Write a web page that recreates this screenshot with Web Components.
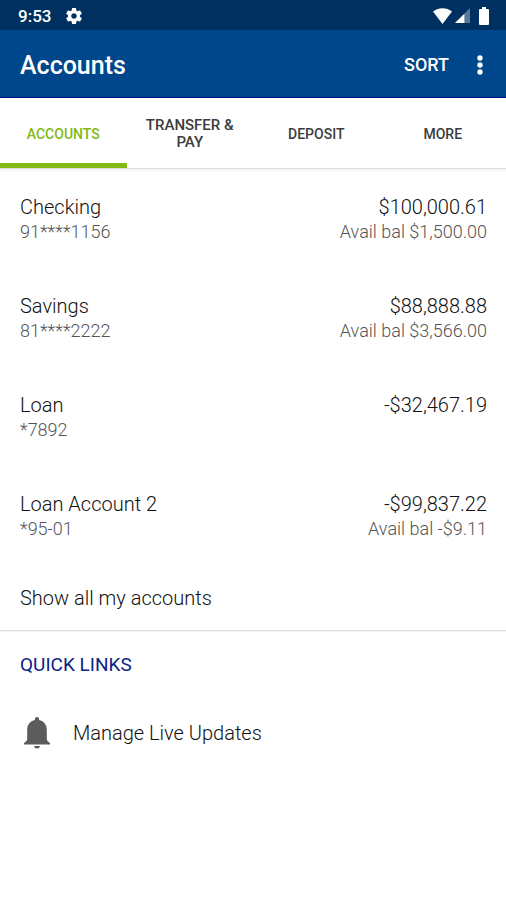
<!DOCTYPE html>
<html lang="en">
<head>
<meta charset="utf-8">
<meta name="viewport" content="width=device-width, initial-scale=1">
<title>Accounts</title>
<style>
  :root {
    --navy: #00305f;
    --blue: #00468b;
    --edge: #000c88;
    --green: #84b816;
    --ink: #111;
    --muted: #555;
    --line: #dedede;
    --gutter: 20px;
  }
  body {
    margin: 0;
    min-height: 100vh;
    background: #fff;
    color: var(--ink);
    font-family: Roboto, "Liberation Sans", sans-serif;
    font-size: 20px;
    font-weight: 300;
    line-height: 24px;
  }
</style>
</head>
<body>
<bank-app></bank-app>

<script>
  const define = (name, html, setup) => {
    const template = document.createElement("template");
    template.innerHTML = html;
    customElements.define(name, class extends HTMLElement {
      constructor() {
        super();
        this.attachShadow({ mode: "open" }).append(template.content.cloneNode(true));
      }
      connectedCallback() {
        if (setup) setup(this, this.shadowRoot);
      }
    });
  };

  define("status-bar", `
    <style>
      :host { display: flex; align-items: center; justify-content: space-between; height: 30px;
        padding: 1px 17px 0 18px; box-sizing: border-box; background: var(--navy); color: #fff; font-size: 17px; font-weight: 500; }
      div { display: flex; align-items: center; gap: 15px; }
      .signals { gap: 3px; }
      .battery { margin-left: 6px; }
      svg { display: block; fill: #fff; }
    </style>
    <div>
      <span><slot></slot></span>
      <svg width="16" height="16" viewBox="2 2 20 20" aria-label="Settings" role="img"><path d="M19.43 12.98c.04-.32.07-.64.07-.98s-.03-.66-.07-.98l2.11-1.65c.19-.15.24-.42.12-.64l-2-3.46c-.12-.22-.39-.3-.61-.22l-2.49 1c-.52-.4-1.08-.73-1.69-.98l-.38-2.65C14.46 2.18 14.25 2 14 2h-4c-.25 0-.46.18-.49.42l-.38 2.65c-.61.25-1.17.59-1.69.98l-2.49-1c-.23-.09-.49 0-.61.22l-2 3.46c-.13.22-.07.49.12.64l2.11 1.65c-.04.32-.07.65-.07.98s.03.66.07.98l-2.11 1.65c-.19.15-.24.42-.12.64l2 3.46c.12.22.39.3.61.22l2.49-1c.52.4 1.08.73 1.69.98l.38 2.65c.03.24.24.42.49.42h4c.25 0 .46-.18.49-.42l.38-2.65c.61-.25 1.17-.59 1.69-.98l2.49 1c.23.09.49 0 .61-.22l2-3.46c.12-.22.07-.49-.12-.64l-2.11-1.65zM12 15.500c-1.930 0-3.500-1.570-3.500-3.500s1.570-3.500 3.500-3.500 3.500 1.570 3.500 3.500-1.570 3.500-3.500 3.500z"/></svg>
    </div>
    <div class="signals">
      <svg width="19" height="16" viewBox="0 0 20 16" preserveAspectRatio="none" aria-label="Wi-Fi" role="img"><path d="M0 3.600C5.500-.9 14.500-.9 20 3.600L10 16z"/></svg>
      <svg width="15" height="15" viewBox="0 0 16 16" aria-label="Mobile signal" role="img"><path d="M16 0v16H0z" opacity=".35"/><path d="M10 6v10H0z"/></svg>
      <svg class="battery" width="10" height="18" viewBox="0 0 10 18" aria-label="Battery" role="img"><path d="M3 0h4v2h2q1 0 1 1v14q0 1-1 1H1q-1 0-1-1V3q0-1 1-1h2z"/></svg>
    </div>`);

  define("app-bar", `
    <style>
      :host { display: flex; align-items: center; box-sizing: border-box; height: 68px;
        padding: 3px 13px 0 var(--gutter); background: var(--blue); border-bottom: 1px solid var(--edge); color: #fff; }
      h1 { flex: 1; margin: 0; padding-top: 2px; font-size: 25px; line-height: 28px; font-weight: 500; }
      button { display: grid; place-items: center; height: 48px; padding: 0 10px; border: 0;
        background: none; color: inherit; font: 500 18px/24px Roboto, "Liberation Sans", sans-serif; cursor: pointer; }
      .sort { margin-right: 8px; }
      svg { display: block; fill: #fff; }
    </style>
    <h1><slot></slot></h1>
    <button class="sort" type="button">SORT</button>
    <button type="button" aria-label="More options">
      <svg width="6" height="20" viewBox="0 0 6 20"><circle cx="3" cy="3" r="2.700"/><circle cx="3" cy="10" r="2.700"/><circle cx="3" cy="17" r="2.700"/></svg>
    </button>`);

  define("tab-bar", `
    <style>
      :host { display: block; border-bottom: 1px solid var(--line); box-shadow: 0 2px #f6f6f6; }
      nav { display: grid; grid-auto-flow: column; grid-auto-columns: minmax(0, 1fr); }
    </style>
    <nav aria-label="Sections"><slot></slot></nav>`);

  define("tab-item", `
    <style>
      :host { display: block; }
      a { display: flex; align-items: center; justify-content: center; box-sizing: border-box; height: 70px;
        padding: 7px 16px 0; border-bottom: 5px solid transparent; color: #3c3c3c;
        font-size: 14px; line-height: 17px; font-weight: 500; text-align: center; text-decoration: none; }
      :host([active]) a { color: var(--green); border-color: var(--green); }
      :host([wide]) a { font-size: 15px; }
    </style>
    <a href="#"><slot></slot></a>`,
    (host, root) => {
      if (host.hasAttribute("active")) root.querySelector("a").setAttribute("aria-current", "page");
    });

  define("account-row", `
    <style>
      :host { display: block; }
      a { display: grid; grid-template-columns: 1fr auto; grid-template-rows: 24px 26px; align-items: center; column-gap: 16px;
        padding: 26px 19px 23px var(--gutter); color: inherit; text-decoration: none; }
      .right { text-align: right; }
      .sub { color: var(--muted); font-size: 18px; }
    </style>
    <a href="#">
      <span><slot name="name"></slot></span>
      <span class="right"><slot name="balance"></slot></span>
      <span class="sub"><slot name="number"></slot></span>
      <span class="sub right"><slot name="available"></slot></span>
    </a>`);

  define("link-row", `
    <style>
      :host { display: block; }
      a { display: flex; align-items: center; gap: 20px; height: 68px; padding: 0 var(--gutter);
        color: inherit; text-decoration: none; }
      :host([divided]) { border-bottom: 1px solid var(--line); box-shadow: 0 1px #f3f3f3; }
      :host([divided]) a { height: 65px; }
    </style>
    <a href="#"><slot name="icon"></slot><span><slot></slot></span></a>`);

  define("bell-icon", `
    <style>
      :host { display: grid; place-items: center; width: 33px; }
      svg { display: block; fill: #5c5c5c; }
    </style>
    <svg width="26" height="32" viewBox="0 0 26 32" aria-hidden="true">
      <path d="M13 0a2.200 2.200 0 0 1 2 3.100C20 4 22.800 8 22.800 13v9.500q.2 1.500 3.200 3.500v1.500H0V26q3-2 3.200-3.500V13C3.200 8 6 4 11 3.100A2.200 2.200 0 0 1 13 0z"/>
      <path d="M10.200 29h5.600a2.800 2.500 0 0 1-5.600 0z"/>
    </svg>`);

  define("section-title", `
    <style>
      :host { display: block; }
      h2 { margin: 0; padding: 22px var(--gutter); color: #0b2384; font-size: 19px; line-height: 24px; font-weight: 400; }
    </style>
    <h2><slot></slot></h2>`);

  define("bank-app", `
    <style>:host { display: block; } main { display: block; }</style>
    <status-bar>9:53</status-bar>
    <app-bar>Accounts</app-bar>
    <tab-bar>
      <tab-item active>ACCOUNTS</tab-item>
      <tab-item wide>TRANSFER &amp; PAY</tab-item>
      <tab-item>DEPOSIT</tab-item>
      <tab-item>MORE</tab-item>
    </tab-bar>
    <main>
      <account-row>
        <span slot="name">Checking</span><span slot="balance">$100,000.61</span>
        <span slot="number">91****1156</span><span slot="available">Avail bal $1,500.00</span>
      </account-row>
      <account-row>
        <span slot="name">Savings</span><span slot="balance">$88,888.88</span>
        <span slot="number">81****2222</span><span slot="available">Avail bal $3,566.00</span>
      </account-row>
      <account-row>
        <span slot="name">Loan</span><span slot="balance">-$32,467.19</span>
        <span slot="number">*7892</span>
      </account-row>
      <account-row>
        <span slot="name">Loan Account 2</span><span slot="balance">-$99,837.22</span>
        <span slot="number">*95-01</span><span slot="available">Avail bal -$9.11</span>
      </account-row>
      <link-row divided>Show all my accounts</link-row>
      <section-title>QUICK LINKS</section-title>
      <link-row><bell-icon slot="icon"></bell-icon>Manage Live Updates</link-row>
    </main>`);
</script>
</body>
</html>
